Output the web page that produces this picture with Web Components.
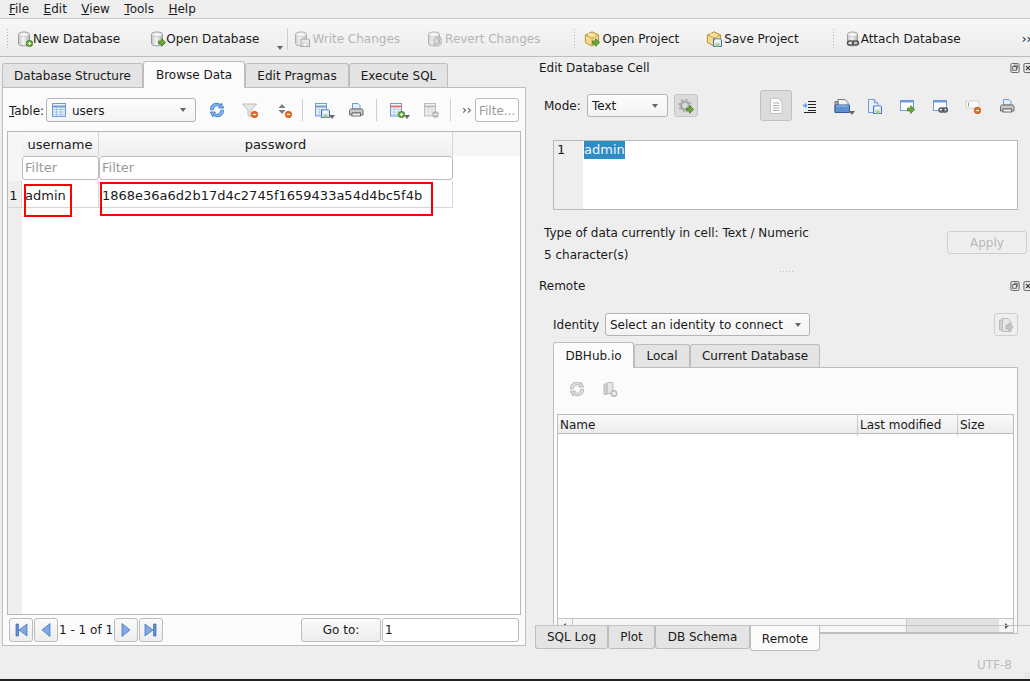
<!DOCTYPE html>
<html lang="en"><head><meta charset="utf-8"><title>DB Browser for SQLite</title>
<style>
html,body{margin:0;padding:0;height:681px;overflow:hidden;background:#eeeeee;font:12px "DejaVu Sans",sans-serif;color:#1a1a1a}
</style></head><body>
<app-window></app-window>
<script>
const S='stroke-linejoin="round" stroke-linecap="round"';
const plus='<circle cx="12.5" cy="12.5" r="3.2" fill="#5fa32f" stroke="#3f7d1c" stroke-width=".7"/><path d="M10.8 12.5h3.4M12.5 10.8v3.4" stroke="#fff" stroke-width="1.2"/>';
const minus='<circle cx="12.5" cy="12.5" r="3.2" fill="#e8641b" stroke="#c44d0f" stroke-width=".7"/><path d="M10.8 12.5h3.4" stroke="#fff" stroke-width="1.3"/>';
const arrow='<path d="M8.5 10h3.2V7.6L15.6 11.5 11.7 15.4V13H8.5z" fill="#6cab3a" stroke="#3f7d1c" stroke-width=".8"/>';
const grad='<defs><linearGradient id="cg"><stop offset="0" stop-color="#c4c4c4"/><stop offset=".45" stop-color="#f6f6f6"/><stop offset="1" stop-color="#b4b4b4"/></linearGradient></defs>';
const cyl=grad+'<path d="M1.5 3.5C1.500 2 3.500 1 7 1s5.500 1 5.500 2.500v9c0 1.400-2 2.400-5.500 2.400s-5.500-1-5.500-2.400z" fill="url(#cg)" stroke="#9b9b9b"/><ellipse cx="7" cy="3.500" rx="5" ry="2" fill="#f8f8f8" stroke="#b0b0b0" stroke-width=".6"/>';
const floppy='<path d="M7.5 8h7.2l.8.8v6.7h-8z" fill="#dfeaf7" stroke="#3f6fb0"/><rect x="9.5" y="8.5" width="4" height="2.2" fill="#fff"/><rect x="9.5" y="12.500" width="4" height="3" fill="#a9cf7c"/>';
const doc='<path d="M2.5 1.5h6l3.500 3.500v9.500h-9.500z" fill="#eaf1fb" stroke="#6f9bd6"/><path d="M8.500 1.500V5H12" fill="#cfe0f5" stroke="#6f9bd6"/>';
const sheet='<rect x="1.5" y="1.500" width="11" height="12.500" fill="#f3f7fc" stroke="#6f9bd6"/><path d="M1.500 4.500h11" stroke="#6f9bd6" stroke-width="2"/><path d="M2 7.500h10M2 10h10M2 12.500h10M5.500 5v9M9 5v9" stroke="#a9c5e8" stroke-width=".7"/>';
const printer='<path d="M4.500 7V1.500h5.500l2 2V7z" fill="#e3eefb" stroke="#6f9bd6"/><path d="M2.500 7h11.500l1 1.500V13h-2.500v-2h-8.500v2H1.500V8.500z" fill="#c9c9c9" stroke="#6d6d6d"/><rect x="4" y="11" width="8.500" height="3" fill="#f4f4f4" stroke="#6d6d6d"/>';
const box='<path d="M8 .8 14.600 4v7.600L8 15 1.400 11.600V4z" fill="#f5d98c" stroke="#b8913a"/><path d="M1.600 4 8 7.200 14.400 4M8 7.200V15" fill="none" stroke="#b8913a" stroke-width=".7"/><path d="M4.400 2.400 11 5.600" stroke="#fff3cf"/>';
const win='<rect x="1.500" y="2.500" width="13" height="10" fill="#fff" stroke="#6f9bd6"/><path d="M1.500 3.500h13" stroke="#6f9bd6" stroke-width="2"/>';
const link='<rect x="7" y="10" width="5" height="4" rx="2" fill="none" stroke="#555" stroke-width="1.400"/><rect x="10.500" y="10" width="5" height="4" rx="2" fill="none" stroke="#555" stroke-width="1.400"/>';
const cycle=(c,o)=>`<path d="M1.500 7.500A6 6 0 0 1 12 3.200V1l2.800 5H9.500l1.300-1.600A4.300 4.300 0 0 0 4.200 7.500z" fill="${c}" stroke="${o}" stroke-width=".7" ${S}/><path d="M14.500 8.500A6 6 0 0 1 4 12.800V15l-2.800-5h5.300l-1.300 1.600a4.300 4.300 0 0 0 6.600-3.100z" fill="${c}" stroke="${o}" stroke-width=".7" ${S}/>`;
const ICONS={
 newdb:cyl+plus, opendb:cyl+arrow,
 writedb:cyl+'<path d="M7 8h7.500l1 1v6.500H7z" fill="#e8e8e8" stroke="#888"/><rect x="9" y="12" width="4" height="3.400" fill="#fff" stroke="#888" stroke-width=".5"/>',
 revertdb:cyl+cycle('#c4c4c4','#999').replace(/<path /g,'<path transform="translate(5 5) scale(.68)" '),
 openproj:box+arrow, saveproj:box+floppy,
 attach:grad+'<path d="M2.500 3.500C2.500 2 4.500 1 7.500 1s5 1 5 2.500v9c0 1.400-2 2.400-5 2.400s-5-1-5-2.400z" fill="url(#cg)" stroke="#9b9b9b"/><ellipse cx="7.500" cy="3.500" rx="4.600" ry="2" fill="#f8f8f8" stroke="#b0b0b0" stroke-width=".6"/><rect x="2.500" y="10" width="6" height="4" rx="2" fill="none" stroke="#555" stroke-width="1.500"/><rect x="7.500" y="10" width="6" height="4" rx="2" fill="none" stroke="#555" stroke-width="1.500"/>',
 table:'<rect x="1.500" y="1.500" width="13" height="13" fill="#eaf2fb" stroke="#6f9bd6"/><path d="M1.500 4.500h13" stroke="#6f9bd6" stroke-width="2"/><path d="M2 7.500h12M2 10h12M2 12.500h12M5.500 5v9M10 5v9" stroke="#8fb4e2" stroke-width=".7"/>',
 refresh:cycle('#7db2ee','#2a68bd'), refreshgray:cycle('#dcdcdc','#a8a8a8'),
 funnel:'<path d="M.5 2h14L9 8v6.500l-3-1.500V8z" fill="#e8e8e8" stroke="#bcbcbc"/>'+minus,
 sort:'<path d="M6 2 9.500 6h-7zM6 12 2.500 8h7z" fill="#7d7d7d"/>'+minus,
 savetbl:sheet+floppy, print:printer,
 addrow:sheet.replace(/#6f9bd6" stroke-width="2/,'#e57368" stroke-width="2')+plus,
 delrow:sheet.replace(/#6f9bd6/g,'#bdbdbd').replace(/#a9c5e8/g,'#d5d5d5').replace('#f3f7fc','#f2f2f2')+'<circle cx="12.500" cy="12.500" r="3.200" fill="#b5b5b5"/><path d="M10.800 12.500h3.400" stroke="#fff" stroke-width="1.300"/>',
 first:'<path d="M3 2h2.500v12H3z" fill="#5d8fd8" stroke="#3c6cb4" stroke-width=".7"/><path d="M14 2v12L6 8z" fill="#7da9e8" stroke="#3c6cb4" stroke-width=".7"/>',
 prev:'<path d="M12 1.500v13L4 8z" fill="#7da9e8" stroke="#3c6cb4" stroke-width=".7"/>',
 next:'<path d="M4 1.500v13L12 8z" fill="#7da9e8" stroke="#3c6cb4" stroke-width=".7"/>',
 last:'<path d="M10.500 2H13v12h-2.500z" fill="#5d8fd8" stroke="#3c6cb4" stroke-width=".7"/><path d="M2 2v12l8-6z" fill="#7da9e8" stroke="#3c6cb4" stroke-width=".7"/>',
 page:'<path d="M2.500 .5h8l3.500 3.500v11.500h-11.500z" fill="#fcfcfc" stroke="#c4c4c4"/><path d="M5 5h6.500M5 7.500h6.500M5 10h6.500M5 12.500h6.500" stroke="#b0b0b0"/>',
 indent:'<path d="M6 3.500h8M6 6.500h8M6 9.500h8M6 12.500h8M2 14.500h12" stroke="#222"/><path d="M1 6.500h2V4.500l2.500 3-2.500 3v-2H1z" fill="#5f9de6"/>',
 importf:'<path d="M4 1.500h7l3 3V9H4z" fill="#f2f2f2" stroke="#777"/><path d="M1 3.500h3v10H1z" fill="#aaa" stroke="#777"/><path d="M1 7h14.500v7.500H1z" fill="#5f8fd0" stroke="#2f5c9c"/><path d="M2 8h12.500" stroke="#a8c6ee"/>',
 savecell:doc+floppy,
 winarrow:win+arrow, winlink:win+link,
 nullset:'<rect x="1" y="3" width="13" height="7" fill="#fafafa" stroke="#d2d2d2"/><path d="M3.500 4.500v4" stroke="#999"/>'+minus,
 gear:'<circle cx="7" cy="7.500" r="4" fill="none" stroke="#aaa" stroke-width="2.600"/><circle cx="7" cy="7.500" r="6" fill="none" stroke="#aaa" stroke-width="1.600" stroke-dasharray="2 2.700"/>'+arrow,
 sendfile:'<path d="M4 1.500h6l3 3v10H4z" fill="#e6e6e6" stroke="#bcbcbc"/><path d="M1.500 3h3v10h-3z" fill="#d0d0d0" stroke="#bcbcbc"/><path d="M8 8h3V5.800L15 10l-4 4.200V12H8z" fill="#c6c6c6" stroke="#a8a8a8" stroke-width=".7"/>',
 servadd:'<path d="M5 1.500h6v11H5z" fill="#e6e6e6" stroke="#bcbcbc"/><path d="M2 3h3v10.500H2z" fill="#d0d0d0" stroke="#bcbcbc"/><circle cx="12" cy="12.500" r="3" fill="#d8d8d8" stroke="#aaa"/><path d="M10.500 12.500h3M12 11v3" stroke="#fff"/>',
 float:'<rect x=".5" y=".5" width="9" height="10" rx="1.500" fill="none" stroke="#555"/><rect x="2.500" y="4" width="4" height="4" fill="none" stroke="#555"/><path d="M4 4V2.500h3.500V6H6.500" fill="none" stroke="#555"/>',
 close:'<rect x=".5" y=".5" width="9" height="10" rx="1.500" fill="none" stroke="#555"/><path d="M2.800 3.200l4.400 4.600M7.200 3.200 2.800 7.800" stroke="#333" stroke-width="1.300"/>'
};
function def(tag,css,html){
  customElements.define(tag,class extends HTMLElement{
    constructor(){super();const r=this.attachShadow({mode:'open'});
      r.innerHTML=`<style>:host{box-sizing:border-box}*{box-sizing:border-box}${css}</style>${typeof html==='function'?'':html}`;}
    connectedCallback(){ if(typeof html==='function'&&!this._d){this._d=1;this.shadowRoot.innerHTML+=html(this);} }
  });
}
def('x-icon',':host{display:inline-flex;flex:none}svg{display:block}',
 h=>{const s=+(h.getAttribute('size')||16),vb=h.getAttribute('vb')||'0 0 16 16';
 return `<svg width="${s}" height="${s}" viewBox="${vb}">${ICONS[h.getAttribute('name')]||''}</svg>`});
def('x-drop',':host{display:block;flex:none;width:0;height:0;border:3.500px solid transparent;border-top:4px solid #666;border-bottom:0}','');
def('x-grip',':host{display:block;flex:none;width:3px;height:22px;background-image:radial-gradient(circle,#b4b4b4 .7px,transparent .8px);background-size:3px 3px}','');
def('x-vsep',':host{display:block;flex:none;width:1px;height:22px;background:#cfcfcf}','');
def('x-menubar',':host{display:flex;height:19px;padding:0 9px;gap:14.5px;align-items:center;border-bottom:1px solid #c8c8c8;background:#eeeeee}',
 ()=>[['F','ile'],['E','dit'],['V','iew'],['T','ools'],['H','elp']].map(([a,b])=>`<span><u>${a}</u>${b}</span>`).join(''));
def('x-tool',':host{display:flex;align-items:center;gap:var(--g,0px);flex:none;white-space:nowrap}:host([disabled]){color:#b5b5b5}:host([disabled]) x-icon{opacity:.75}',
 h=>`<x-icon name="${h.getAttribute('icon')}"></x-icon><slot></slot>`);
def('x-toolbar',':host{display:flex;height:38px;align-items:center;padding:2px 0 0 5px;border-bottom:1px solid #bdbdbd;background:linear-gradient(#f7f7f7,#ececec)}','<slot></slot>');
def('x-tabbar',':host{display:flex;align-items:flex-end;flex:none}','<slot></slot>');
def('x-tab',`:host{display:flex;align-items:center;justify-content:center;height:24px;flex:none;background:#e4e4e4;border:1px solid #bdbdbd;border-bottom:0;border-radius:3px 3px 0 0;white-space:nowrap}
 :host([active]){background:#fbfbfb;margin-bottom:-1px;position:relative;z-index:1;height:27px}
 :host([south]){border:1px solid #bdbdbd;border-top:0;border-radius:0 0 3px 3px;height:23px}
 :host([south][active]){height:25px;background:#fbfbfb;margin:0 0 -2px;padding-top:2px;align-self:flex-start}`,'<slot></slot>');
def('x-combo',`:host{display:flex;align-items:center;height:24px;flex:none;background:linear-gradient(#fdfdfd,#f3f3f3);border:1px solid #b4b4b4;border-radius:3px;padding:0 9px 0 4px;white-space:nowrap}
 .t{flex:1;display:flex;align-items:center;gap:5px;min-width:0}`,'<div class="t"><slot></slot></div><x-drop></x-drop>');
def('x-btn',`:host{display:flex;align-items:center;justify-content:center;height:24px;flex:none;background:linear-gradient(#fafafa,#ededed);border:1px solid #bcbcbc;border-radius:3px;white-space:nowrap}
 :host([disabled]){color:#b8b8b8;background:#eeeeee;border-color:#cfcfcf}
 :host([checked]){background:#dcdcdc;border-color:#c0c0c0}`,'<slot></slot>');
def('x-input',`:host{display:flex;align-items:center;height:24px;flex:none;background:#fff;border:1px solid #bcbcbc;border-radius:3px;padding:0 2px;white-space:nowrap;overflow:hidden}`,'<slot></slot>');
def('x-dock-title',`:host{display:flex;align-items:center;height:20px;padding:2px 0 0 9px;flex:none}
 .s{flex:1}.b{display:flex;gap:3px;margin-right:-3px}`,
 '<span class="s"><slot></slot></span><div class="b"><x-icon name="float" size="10" vb="0 0 10 11"></x-icon><x-icon name="close" size="10" vb="0 0 10 11"></x-icon></div>');

def('x-data-table',`:host{display:block;position:relative;height:484px;background:#fff;border:1px solid #b9b9b9;overflow:hidden;font-size:13px}
 .g{display:grid;grid-template-columns:14px 77px 354px;grid-template-rows:24px 25px 27px;width:445px;position:relative}
 .bg{position:absolute;inset:0 auto 0 0;width:14px;background:#eeeeee}
 .top{position:absolute;left:0;right:0;top:0;height:24px;background:#f6f6f6}
 .h{display:flex;align-items:center;justify-content:center;border-right:1px solid #d6d6d6;position:relative;background:linear-gradient(#f9f9f9,#efefef)}
 .c{border-bottom:1px solid #d6d6d6;border-right:1px solid #d6d6d6;display:flex;align-items:center;padding:2px 0 0 3px;background:#fff;position:relative}
 .n{border-bottom:1px solid #d6d6d6;border-right:1px solid #d6d6d6;display:flex;align-items:center;justify-content:center;background:#eee;position:relative;padding:2px 2px 0 0}
 .f{position:relative;background:#f6f6f6}
 x-input{height:24px;color:#9a9a9a;position:relative;padding-bottom:2px}
 .red{position:absolute;border:2px solid #f00;z-index:3}`,
 `<div class="top"></div><div class="bg"></div><div class="g">
 <div class="h" style="background:#f6f6f6;border:0"></div><div class="h">username</div><div class="h">password</div>
 <div class="f"></div><x-input>Filter</x-input><x-input>Filter</x-input>
 <div class="n">1</div><div class="c">admin</div><div class="c">1868e36a6d2b17d4c2745f1659433a54d4bc5f4b</div>
 </div>
 <div class="red" style="left:16px;top:52px;width:48px;height:33px"></div>
 <div class="red" style="left:92px;top:50px;width:333px;height:34px"></div>`);

def('x-browse-panel',`:host{display:flex;flex-direction:column;width:524px;height:559px;margin-left:2px;background:#fbfbfb;border:1px solid #bdbdbd;padding:10px 4px 0 4px}
 .bar{display:flex;align-items:center;height:24px;flex:none;margin-bottom:9px}
 .nav{display:flex;align-items:center;height:24px;margin-top:3px;margin-left:2px}
 x-btn.n{width:24px;margin-right:1px}`,
 `<div class="bar"><span style="margin-left:2px;width:37px;padding-top:2px"><u>T</u>able:</span>
   <x-combo style="width:150px"><x-icon name="table"></x-icon><span style="padding-top:2px">users</span></x-combo>
   <x-icon name="refresh" style="margin-left:13px"></x-icon>
   <x-icon name="funnel" style="margin-left:17px"></x-icon>
   <x-icon name="sort" style="margin-left:18px"></x-icon>
   <x-vsep style="margin-left:10px"></x-vsep>
   <x-icon name="savetbl" style="margin-left:11px"></x-icon><x-drop style="margin:14px 0 0 -1px"></x-drop>
   <x-icon name="print" style="margin-left:13px"></x-icon>
   <x-vsep style="margin-left:12px"></x-vsep>
   <x-icon name="addrow" style="margin-left:12px"></x-icon><x-drop style="margin:14px 0 0 -1px"></x-drop>
   <x-icon name="delrow" style="margin-left:13px"></x-icon>
   <x-vsep style="margin-left:11px"></x-vsep>
   <span style="margin-left:11px;width:13px;color:#444">››</span>
   <x-input style="width:44px;color:#9a9a9a;padding:2px 2px 0 3px">Filte...</x-input></div>
  <x-data-table></x-data-table>
  <div class="nav">
   <x-btn class="n"><x-icon name="first"></x-icon></x-btn><x-btn class="n"><x-icon name="prev"></x-icon></x-btn>
   <span style="margin:0 1px 0 0;white-space:nowrap;width:54px">1 - 1 of 1</span>
   <x-btn class="n"><x-icon name="next"></x-icon></x-btn><x-btn class="n"><x-icon name="last"></x-icon></x-btn>
   <x-btn style="width:80px;margin-left:137px">Go to:</x-btn>
   <x-input style="width:137px;margin-left:1px">1</x-input>
  </div>`);

def('x-cell-dock',`:host{display:block;height:205px}
 .mode{display:flex;align-items:center;height:33px;padding-left:14px;margin-top:12px}
 .ed{display:flex;margin:18px 12px 0 23px;height:70px;border:1px solid #b9b9b9;background:#fff;font-size:13px}
 .gut{width:29px;background:#eeeeee;padding:0 0 0 3px;line-height:18px}
 .sel{background:#308cc6;color:#f5f5f5;height:18px;line-height:18px;margin:0 0 0 1px}
 .info{display:flex;margin:12px 3px 0 14px}
 .l{flex:1;line-height:22px}`,
 `<x-dock-title>Edit Database Cell</x-dock-title>
 <div class="mode"><span style="width:43px">Mode:</span>
  <x-combo style="width:81px;height:23px;padding-left:4px">Text</x-combo>
  <x-btn disabled style="width:24px;height:23px;margin-left:6px;background:#dcdcdc;border-color:#c4c4c4"><x-icon name="gear"></x-icon></x-btn>
  <x-btn checked style="width:32px;height:31px;margin-left:62px"><x-icon name="page"></x-icon></x-btn>
  <x-icon name="indent" style="margin-left:10px"></x-icon>
  <x-icon name="importf" style="margin-left:16px"></x-icon><x-drop style="margin:14px 0 0 -1px"></x-drop>
  <x-icon name="savecell" style="margin-left:11px"></x-icon>
  <x-icon name="winarrow" style="margin-left:17px"></x-icon>
  <x-icon name="winlink" style="margin-left:17px"></x-icon>
  <x-icon name="nullset" style="margin-left:17px"></x-icon>
  <x-icon name="print" style="margin-left:18px"></x-icon>
 </div>
 <div class="ed"><div class="gut">1</div><div><div class="sel">admin</div></div></div>
 <div class="info"><div class="l">Type of data currently in cell: Text / Numeric<br>5 character(s)</div>
 <x-btn disabled style="width:80px;height:23px;margin-top:9px">Apply</x-btn></div>`);

def('x-remote-dock',`:host{display:block}
 .id{display:flex;align-items:center;height:23px;margin:18px 12px 0 23px}
 .pane{height:267px;margin:0 12px 0 23px;border:1px solid #bdbdbd;background:#fbfbfb;padding:0 3px;position:relative}
 .tb{display:flex;align-items:center;height:46px;padding:0 0 5px 12px;gap:17px}
 .tree{background:#fff;border:1px solid #bdbdbd;height:219px;position:relative;overflow:hidden}
 .th{display:grid;grid-template-columns:300px 100px 1fr;height:19px;border-bottom:1px solid #bdbdbd;background:linear-gradient(#f9f9f9,#ececec)}
 .th span{padding-left:2px;border-right:1px solid #c8c8c8;line-height:21px;white-space:nowrap}
 .sb{position:absolute;left:0;right:0;bottom:0;height:14px;border-top:1px solid #c4c4c4;background:#f6f6f6;display:flex;align-items:center;justify-content:space-between;padding:0 4px}
 .th span:last-child{border:0}
 .lb{position:absolute;left:14px;top:0;bottom:0;width:1px;background:#c8c8c8}
 .thumb{position:absolute;right:14px;top:0;bottom:0;width:93px;background:#e2e2e2;border-left:1px solid #c8c8c8}
 .a{width:0;height:0;border:3.500px solid transparent}`,
 `<x-dock-title>Remote</x-dock-title>
 <div class="id"><span style="width:52px">Identity</span>
  <x-combo style="width:205px;height:23px;padding:0 8px 0 4px">Select an identity to connect</x-combo>
  <span style="flex:1"></span>
  <x-btn disabled style="width:24px;height:23px"><x-icon name="sendfile"></x-icon></x-btn></div>
 <x-tabbar style="margin:6px 0 0 23px"><x-tab active style="width:81px;height:26px">DBHub.io</x-tab><x-tab style="width:56px;height:23px">Local</x-tab><x-tab style="width:130px;height:23px">Current Database</x-tab></x-tabbar>
 <div class="pane"><div class="tb"><x-icon name="refreshgray"></x-icon><x-icon name="servadd"></x-icon></div>
  <div class="tree"><div class="th"><span>Name</span><span>Last modified</span><span>Size</span></div>
   <div class="sb"><div class="a" style="border-right:4px solid #555;border-left:0"></div><div class="lb"></div><div class="thumb"></div><div class="a" style="border-left:4px solid #555;border-right:0"></div></div>
  </div></div>`);

def('x-statusbar',`:host{display:flex;justify-content:flex-end;align-items:center;height:22px;padding:0 18px 6px 0;color:#bcbcbc;flex:none}`,'<slot></slot>');

def('app-window',`:host{display:flex;flex-direction:column;height:681px;border-bottom:2px solid #222;position:relative}
 .main{display:flex;flex:1;min-height:0}
 .left{width:530px;flex:none;padding-top:3px;display:flex;flex-direction:column}
 .right{flex:1;min-width:0;position:relative}
 .south{display:flex;align-items:flex-start;position:absolute;left:5px;top:568px;right:0;border-top:1px solid #c4c4c4;z-index:4;height:25px}
 .handle{width:16px;height:3px;margin:8px 0 2px 249px;background-image:radial-gradient(circle,#bdbdbd .6px,transparent .7px);background-size:3px 3px}
 .sizegrip{position:absolute;right:0;bottom:1px;width:6px;height:6px;background-image:radial-gradient(circle,#bdbdbd .6px,transparent .7px);background-size:3px 3px}`,
 `<x-menubar></x-menubar>
 <x-toolbar>
  <x-grip style="margin:0 8px 0 1px"></x-grip>
  <x-tool icon="newdb">New Database</x-tool>
  <x-tool icon="opendb" style="margin-left:30px">Open Database</x-tool>
  <x-drop style="margin:19px 0 0 18px"></x-drop>
  <x-vsep style="margin-left:4px"></x-vsep>
  <x-tool icon="writedb" disabled style="margin-left:6px;--g:2px">Write Changes</x-tool>
  <x-tool icon="revertdb" disabled style="margin-left:27px;--g:2px">Revert Changes</x-tool>
  <x-grip style="margin-left:33px"></x-grip>
  <x-tool icon="openproj" style="margin-left:8px;--g:2px">Open Project</x-tool>
  <x-tool icon="saveproj" style="margin-left:27px;--g:2px">Save Project</x-tool>
  <x-grip style="margin-left:33px"></x-grip>
  <x-tool icon="attach" style="margin-left:10px">Attach Database</x-tool>
  <span style="margin-left:61px">››</span>
 </x-toolbar>
 <div class="main">
  <div class="left"><x-tabbar style="margin-left:2px;height:27px">
    <x-tab style="width:141px">Database Structure</x-tab><x-tab active style="width:102px">Browse Data</x-tab><x-tab style="width:104px">Edit Pragmas</x-tab><x-tab style="width:99px">Execute SQL</x-tab></x-tabbar>
   <x-browse-panel></x-browse-panel></div>
  <div class="right"><x-cell-dock></x-cell-dock><div class="handle"></div><x-remote-dock></x-remote-dock>
   <div class="south"><x-tab south style="width:73px">SQL Log</x-tab><x-tab south style="width:47px">Plot</x-tab><x-tab south style="width:95px">DB Schema</x-tab><x-tab south active style="width:70px">Remote</x-tab></div>
  </div>
 </div>
 <x-statusbar>UTF-8</x-statusbar>
 <div class="sizegrip"></div>`);
</script>
</body></html>
